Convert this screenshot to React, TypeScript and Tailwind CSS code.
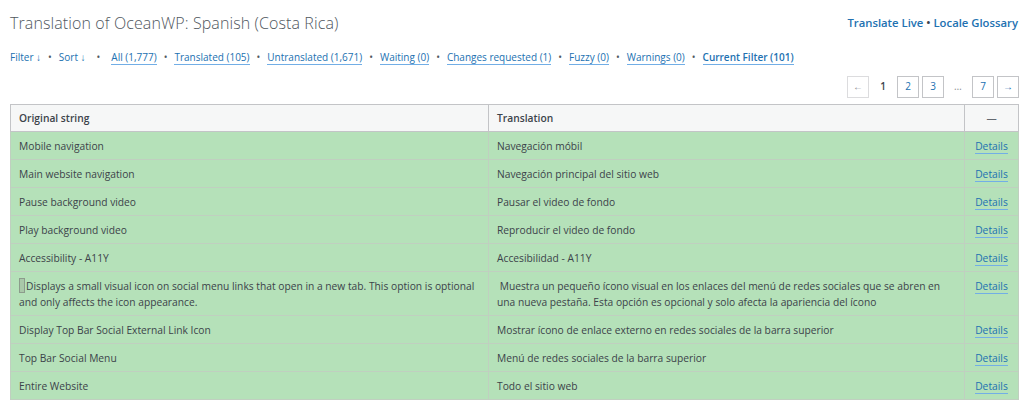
import React from 'react';

type Row = { original: React.ReactNode; translation: React.ReactNode };

const rows: Row[] = [
  { original: 'Mobile navigation', translation: 'Navegación móbil' },
  { original: 'Main website navigation', translation: 'Navegación principal del sitio web' },
  { original: 'Pause background video', translation: 'Pausar el video de fondo' },
  { original: 'Play background video', translation: 'Reproducir el video de fondo' },
  { original: 'Accessibility - A11Y', translation: 'Accesibilidad - A11Y' },
  {
    original: (
      <>
        <span className="inline-block w-[6px] h-[15px] align-[-3px] mr-[1px] border border-[#8c9c8c] bg-[#a9c8a9]" />
        Displays a small visual icon on social menu links that open in a new tab. This option is optional
        <br />
        and only affects the icon appearance.
      </>
    ),
    translation: (
      <>
        {'\u00a0'}Muestra un pequeño ícono visual en los enlaces del menú de redes sociales que se abren en
        <br />
        una nueva pestaña. Esta opción es opcional y solo afecta la apariencia del ícono
      </>
    ),
  },
  { original: 'Display Top Bar Social External Link Icon', translation: 'Mostrar ícono de enlace externo en redes sociales de la barra superior' },
  { original: 'Top Bar Social Menu', translation: 'Menú de redes sociales de la barra superior' },
  { original: 'Entire Website', translation: 'Todo el sitio web' },
];

const filters = [
  'All (1,777)',
  'Translated (105)',
  'Untranslated (1,671)',
  'Waiting (0)',
  'Changes requested (1)',
  'Fuzzy (0)',
  'Warnings (0)',
];

function Dot() {
  return <span className="text-[#50575e] px-[7px]">•</span>;
}

function PageButton({ children, muted }: { children: React.ReactNode; muted?: boolean }) {
  return (
    <span
      className={`w-[22px] h-[22px] flex items-center justify-center border text-[10px] ${
        muted ? 'text-[#8c8f94] border-[#dcdcde]' : 'text-[#2271b1] border-[#c3c4c7]'
      }`}
    >
      {children}
    </span>
  );
}

export default function App() {
  return (
    <div className="w-[1022px] h-[400px] overflow-hidden bg-white pl-[10px] pr-[3px] font-['Open_Sans',sans-serif] text-[#3c434a]">
      <div className="flex items-center justify-between h-[45px] pt-[1px]">
        <h1 className="text-[16px] font-light text-[#50575e] tracking-[0.1px]">Translation of OceanWP: Spanish (Costa Rica)</h1>
        <div className="text-[11.3px] font-semibold text-[#2271b1] mr-[1px]">
          Translate Live <span className="text-[#3c434a]">•</span> Locale Glossary
        </div>
      </div>

      <div className="flex items-center h-[25px] text-[10px] text-[#2271b1]">
        <span>Filter ↓</span>
        <Dot />
        <span>Sort ↓</span>
        <span className="text-[#50575e] px-[11px]">•</span>
        {filters.map((f) => (
          <React.Fragment key={f}>
            <span className="border-b border-[#72aee6] leading-[14px]">{f}</span>
            <Dot />
          </React.Fragment>
        ))}
        <span className="border-b border-[#72aee6] leading-[14px] font-semibold">Current Filter (101)</span>
      </div>

      <div className="flex items-center justify-end gap-[3px] h-[34px] pb-[1px]">
        <PageButton muted>←</PageButton>
        <span className="w-[22px] text-center text-[10px] font-semibold text-[#3c434a]">1</span>
        <PageButton>2</PageButton>
        <PageButton>3</PageButton>
        <span className="w-[22px] text-center text-[10px] text-[#8c8f94]">…</span>
        <PageButton>7</PageButton>
        <PageButton>→</PageButton>
      </div>

      <table className="w-full border-collapse border border-[#c3c4c7] text-[10.25px] leading-[16px]">
        <thead>
          <tr className="bg-[#f6f7f7] h-[27px]">
            <th className="text-left font-semibold px-[8px] w-[478px] border border-[#c3c4c7]">Original string</th>
            <th className="text-left font-semibold px-[8px] w-[476px] border border-[#c3c4c7]">Translation</th>
            <th className="font-normal border border-[#c3c4c7] text-[#646970]">—</th>
          </tr>
        </thead>
        <tbody>
          {rows.map((r, i) => (
            <tr key={i} className="bg-[#b5e1b9]">
              <td className="px-[8px] pt-[6px] pb-[5px] border border-[#c0cfc0] align-top whitespace-nowrap">{r.original}</td>
              <td className="px-[8px] pt-[6px] pb-[5px] border border-[#c0cfc0] align-top whitespace-nowrap">{r.translation}</td>
              <td className="px-[8px] pt-[6px] pb-[5px] border border-[#c0cfc0] align-top text-center">
                <span className="text-[#2271b1] border-b border-[#72aee6]">Details</span>
              </td>
            </tr>
          ))}
        </tbody>
      </table>
    </div>
  );
}
